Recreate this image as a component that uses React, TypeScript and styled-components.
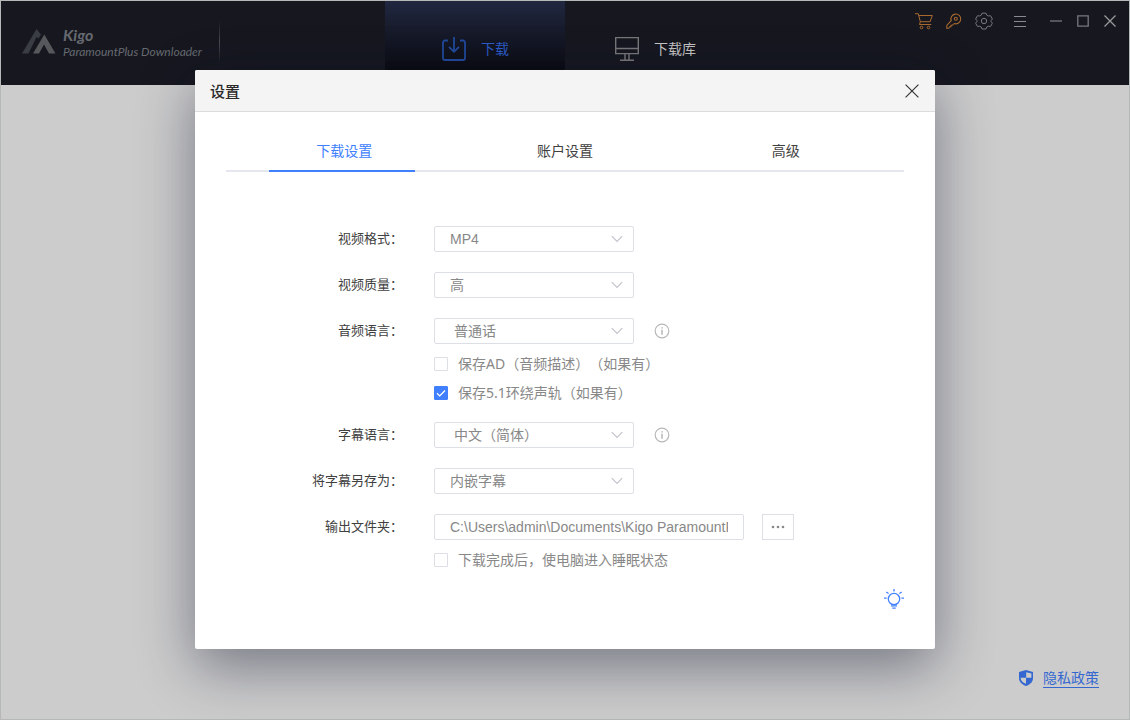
import React, { useState } from 'react';
import styled, { createGlobalStyle, css } from 'styled-components';

const uiFont = `"Noto Sans", "Noto Sans CJK SC", sans-serif`;
const cjkFont = `"Noto Sans CJK SC", sans-serif`;
const fieldFont = `"Liberation Sans", "Noto Sans CJK SC", sans-serif`;
const blue = '#4080ff';

const GlobalStyle = createGlobalStyle`
  *, *::before, *::after { box-sizing: border-box; }
  body {
    margin: 0;
    background: #cccccc;
    font-family: ${uiFont};
    text-spacing-trim: space-all;
  }
  button { margin: 0; padding: 0; border: 0; background: none; font: inherit; cursor: pointer; }
  svg { display: block; }
`;

const Window = styled.div`
  display: flex;
  flex-direction: column;
  min-height: 100vh;
  border: 1px solid #b4b8b6;
  background: #cccccc;
`;

const TitleBar = styled.header`
  display: grid;
  grid-template-columns: 1fr auto 1fr;
  height: 84px;
  background: #16171f;
`;

const Brand = styled.div`
  display: flex;
  align-items: center;
  align-self: start;
  height: 42px;
  margin-top: 20px;
  padding-left: 21px;
  gap: 7px;
  color: #666a70;
  font-family: Lato, sans-serif;
  font-style: italic;
`;

const BrandText = styled.div`
  white-space: nowrap;
`;

const BrandName = styled.div`
  font-size: 16px;
  line-height: 18px;
  font-weight: 700;
`;

const BrandProduct = styled.div`
  font-size: 12px;
  line-height: 15px;
`;

const BrandDivider = styled.div`
  width: 1px;
  height: 42px;
  margin-left: 10px;
  background: linear-gradient(#16171f, #4a4c54 50%, #16171f);
`;

const MainNav = styled.nav`
  display: flex;
`;

const NavButton = styled.button<{ $active?: boolean }>`
  display: flex;
  align-items: center;
  justify-content: center;
  gap: 14px;
  width: 180px;
  padding-top: 12px;
  font-family: ${cjkFont};
  font-size: 14px;
  color: #c4c4c4;

  span { padding-bottom: 2px; }

  ${(p) =>
    p.$active &&
    css`
      color: #2c5cc8;
      background: linear-gradient(#20273f, #0a0a10 84%);
    `}
`;

const WindowTools = styled.div`
  display: flex;
  justify-content: flex-end;
  align-items: center;
  align-self: start;
  height: 40px;
  padding-right: 4px;
`;

const ToolButton = styled.button<{ $width: number; $color: string }>`
  display: flex;
  align-items: center;
  justify-content: center;
  width: ${(p) => p.$width}px;
  height: 24px;
  color: ${(p) => p.$color};
`;

const Body = styled.main`
  display: flex;
  flex: 1;
  align-items: flex-end;
  justify-content: flex-end;
  padding: 0 30px 31px;
`;

const PrivacyLink = styled.a`
  display: flex;
  align-items: center;
  gap: 10px;
  color: #3468d0;
  font-family: ${cjkFont};
  font-size: 14px;
  line-height: 19px;
  text-decoration: none;

  span { border-bottom: 1px solid #3468d0; }
`;

const Overlay = styled.div`
  position: absolute;
  inset: 0;
  display: flex;
  align-items: flex-start;
  justify-content: center;
  padding: 70px 20px;
`;

const Dialog = styled.section`
  width: 100%;
  max-width: 740px;
  border-radius: 2px;
  background: #ffffff;
  box-shadow: 0 18px 56px rgba(15, 20, 45, 0.45);
`;

const DialogHeader = styled.header`
  display: flex;
  align-items: center;
  justify-content: space-between;
  height: 42px;
  padding: 0 16px 0 15px;
  border-bottom: 1px solid #dddddd;
  border-radius: 2px 2px 0 0;
  background: #f4f4f4;
`;

const DialogTitle = styled.h1`
  margin: 0;
  font-family: ${cjkFont};
  font-size: 15px;
  font-weight: 500;
  color: #2a2a2a;
`;

const CloseButton = styled.button`
  color: #333333;
`;

const TabList = styled.div`
  display: grid;
  grid-template-columns: repeat(3, 1fr);
  margin: 20px 31px 0;
  padding: 0 8px;
  border-bottom: 2px solid #e4e7ed;
`;

const TabButton = styled.button<{ $active: boolean }>`
  position: relative;
  height: 38px;
  padding-bottom: 2px;
  font-family: ${cjkFont};
  font-size: 14px;
  line-height: 36px;
  color: ${(p) => (p.$active ? blue : '#404040')};

  &::after {
    content: '';
    position: absolute;
    left: 16%;
    right: 18%;
    bottom: -2px;
    height: 2px;
    background: ${(p) => (p.$active ? blue : 'transparent')};
  }
`;

const Form = styled.form`
  display: flex;
  flex-direction: column;
  padding: 54px 31px 0 31px;
`;

const Row = styled.div`
  display: grid;
  grid-template-columns: 177px 1fr;
  column-gap: 31px;
  margin-bottom: 20px;
`;

const RowLabel = styled.label`
  font-family: ${cjkFont};
  font-size: 13px;
  line-height: 24px;
  text-align: right;
  color: #404040;
`;

const Controls = styled.div`
  display: flex;
  align-items: center;
`;

const SelectBox = styled.div`
  position: relative;
  width: 200px;
  color: #c0c4cc;

  svg {
    position: absolute;
    top: 9px;
    right: 11px;
    pointer-events: none;
  }
`;

const fieldStyle = css`
  display: block;
  width: 100%;
  height: 26px;
  border: 1px solid #dcdfe6;
  border-radius: 2px;
  background: #ffffff;
  font-family: ${fieldFont};
  font-size: 14px;
  color: #888888;
  outline: none;
`;

const Select = styled.select<{ $indent?: boolean }>`
  ${fieldStyle}
  appearance: none;
  padding: 0 30px 0 ${(p) => (p.$indent ? 19 : 15)}px;
`;

const PathInput = styled.input`
  ${fieldStyle}
  max-width: 310px;
  padding: 0 15px 0 15px;
`;

const InfoButton = styled.button`
  margin-left: 20px;
  color: #b8b8b8;
`;

const BrowseButton = styled.button`
  display: flex;
  align-items: center;
  justify-content: center;
  width: 32px;
  height: 26px;
  margin-left: 18px;
  border: 1px solid #dcdfe6;
  color: #888888;
`;

const CheckGroup = styled.div`
  grid-column: 2;
  padding-top: 5px;
  margin-bottom: -5px;
`;

const CheckLabel = styled.label`
  display: flex;
  align-items: center;
  gap: 10px;
  height: 29px;
  font-size: 14px;
  line-height: 20px;
  color: #888888;
`;

const CheckBox = styled.span`
  position: relative;
  width: 14px;
  height: 14px;

  svg {
    position: absolute;
    inset: 0;
    pointer-events: none;
  }
`;

const CheckInput = styled.input`
  appearance: none;
  display: block;
  width: 14px;
  height: 14px;
  margin: 0;
  border: 1px solid #dcdfe6;
  border-radius: 1px;
  background: #ffffff;

  &:checked {
    border-color: ${blue};
    background: ${blue};
  }
`;

const DialogFooter = styled.footer`
  display: flex;
  justify-content: flex-end;
  padding: 0 31px 40px;
`;

const TipButton = styled.button`
  color: ${blue};
`;

const Logo = () => (
  <svg width="34" height="26" viewBox="0 0 34 26" aria-hidden="true">
    <path d="M0 24.500 14.500 0l4.500 5.500-2.500 4-2-1.500L6.500 24.500z" fill="#3a3d44" />
    <path d="M11 24.500 22.300 5.500 33.500 24.500H27l-5-9-5 9z" fill="#56585c" />
  </svg>
);

const DownloadIcon = () => (
  <svg width="26" height="26" viewBox="0 0 26 26" fill="none" stroke="#214a9c" strokeWidth="1.800" aria-hidden="true">
    <path d="M7 4.500H4a2 2 0 0 0-2 2V22a2 2 0 0 0 2 2h18a2 2 0 0 0 2-2V6.500a2 2 0 0 0-2-2h-3M13 1v15M8 10.800l5 5 5-5" />
  </svg>
);

const MonitorIcon = () => (
  <svg width="26" height="26" viewBox="0 0 26 26" fill="none" stroke="#77777a" strokeWidth="1.400" aria-hidden="true">
    <path d="M1.700 1.600h22.600v16H1.700zM1.700 12.500h22.600M11 18v6M15 18v6M6 24.250h14" />
  </svg>
);

const CartIcon = () => (
  <svg width="18" height="17" viewBox="0 0 18 17" fill="none" stroke="currentColor" aria-hidden="true">
    <path d="M0 .7h3.300l2 8h9.800l2.200-6.200H3.800M5.300 8.700l-.8 2.800h11.800" />
    <circle cx="6.500" cy="14.500" r="1.300" />
    <circle cx="13.500" cy="14.500" r="1.300" />
  </svg>
);

const KeyIcon = () => (
  <svg width="16" height="16" viewBox="0 0 16 16" fill="none" stroke="currentColor" strokeWidth="1.100" aria-hidden="true">
    <path d="M5.200 7.700A4.900 4.900 0 1 1 8.200 10.600L6.300 12.300H5v1.400H3.700L2.700 15.200H.8v-2.700z" />
    <circle cx="9.800" cy="5.800" r="1.500" />
  </svg>
);

const GearIcon = () => (
  <svg width="18" height="18" viewBox="0 0 18 18" fill="none" stroke="currentColor" aria-hidden="true">
    <path d="M7 1.200h4l.8 2 1.500.8 2.200-.3 1.900 3.300L16 8.700v.8l1.400 1.700-1.900 3.300-2.200-.3-1.500.8-.8 2H7l-.8-2-1.500-.8-2.200.3-1.900-3.300L2 9.500v-.8L.6 7l1.900-3.300 2.200.3 1.500-.8z" />
    <circle cx="9" cy="9" r="2.700" />
  </svg>
);

const MenuIcon = () => (
  <svg width="12" height="11" viewBox="0 0 12 11" stroke="currentColor" aria-hidden="true">
    <path d="M0 .5h12M0 5.500h12M0 10.500h12" />
  </svg>
);

const MinimizeIcon = () => (
  <svg width="12" height="12" viewBox="0 0 12 12" stroke="currentColor" aria-hidden="true">
    <path d="M0 6h12" strokeWidth="1.300" />
  </svg>
);

const MaximizeIcon = () => (
  <svg width="12" height="12" viewBox="0 0 12 12" fill="none" stroke="currentColor" aria-hidden="true">
    <path d="M.8.8h10.400v10.400H.8z" strokeWidth="1.300" />
  </svg>
);

const CrossIcon = ({ size = 12, stroke = 1 }: { size?: number; stroke?: number }) => (
  <svg width={size} height={size} viewBox="0 0 12 12" stroke="currentColor" strokeWidth={stroke} aria-hidden="true">
    <path d="M.5.5l11 11M11.500.5l-11 11" />
  </svg>
);

const ChevronIcon = () => (
  <svg width="12" height="8" viewBox="0 0 12 8" fill="none" stroke="currentColor" strokeWidth="1.200" aria-hidden="true">
    <path d="M.8 1.200 6 6.400l5.200-5.200" />
  </svg>
);

const InfoIcon = () => (
  <svg width="16" height="16" viewBox="0 0 16 16" fill="none" stroke="currentColor" strokeWidth="1.200" aria-hidden="true">
    <circle cx="8" cy="8" r="6.800" />
    <path d="M8 6.800v5M8 4.200v1.400" strokeWidth="1.500" />
  </svg>
);

const CheckIcon = () => (
  <svg width="14" height="14" viewBox="0 0 14 14" fill="none" stroke="#ffffff" strokeWidth="1.300" aria-hidden="true">
    <path d="M3 7.200l2.700 2.700L11 4.500" />
  </svg>
);

const DotsIcon = () => (
  <svg width="14" height="4" viewBox="0 0 14 4" fill="currentColor" aria-hidden="true">
    <circle cx="2" cy="2" r="1.300" />
    <circle cx="7" cy="2" r="1.300" />
    <circle cx="12" cy="2" r="1.300" />
  </svg>
);

const BulbIcon = () => (
  <svg width="20" height="20" viewBox="0 0 20 20" fill="none" stroke="currentColor" strokeWidth="1.300" aria-hidden="true">
    <circle cx="10" cy="10" r="5.700" />
    <path d="M7 16.900h6M8.300 19.200h3.400M10 0v2.500M0 9.200h2.600M17.400 9.200H20M2.300 3l2.300 1.500M17.700 3l-2.300 1.500" />
  </svg>
);

const ShieldIcon = () => (
  <svg width="14" height="16" viewBox="0 0 14 16" aria-hidden="true">
    <path d="M7 0l7 2v6c0 4-3 6.500-7 8-4-1.500-7-4-7-8V2z" fill="#3468d0" />
    <path d="M7.200 2.200 12.400 3.400V7.800H7.200zM1.600 7.800H7v6C3.800 12.500 1.700 10.800 1.600 7.800z" fill="#cccccc" />
  </svg>
);

type SelectFieldProps = {
  id: string;
  label: string;
  options: string[];
  indent?: boolean;
  info?: string;
  children?: React.ReactNode;
};

const SelectField = ({ id, label, options, indent, info, children }: SelectFieldProps) => (
  <Row>
    <RowLabel htmlFor={id}>{label}</RowLabel>
    <Controls>
      <SelectBox>
        <Select id={id} $indent={indent}>
          {options.map((o) => (
            <option key={o}>{o}</option>
          ))}
        </Select>
        <ChevronIcon />
      </SelectBox>
      {info && (
        <InfoButton type="button" aria-label={info}>
          <InfoIcon />
        </InfoButton>
      )}
    </Controls>
    {children}
  </Row>
);

const CheckField = ({ text, initial = false }: { text: string; initial?: boolean }) => {
  const [checked, setChecked] = useState(initial);
  return (
    <CheckLabel>
      <CheckBox>
        <CheckInput type="checkbox" checked={checked} onChange={(e) => setChecked(e.target.checked)} />
        {checked && <CheckIcon />}
      </CheckBox>
      {text}
    </CheckLabel>
  );
};

const tabs = ['下载设置', '账户设置', '高级'];

export default function App() {
  const [tab, setTab] = useState(0);
  return (
    <>
      <GlobalStyle />
      <Window>
        <TitleBar>
          <Brand>
            <Logo />
            <BrandText>
              <BrandName>Kigo</BrandName>
              <BrandProduct>ParamountPlus Downloader</BrandProduct>
            </BrandText>
            <BrandDivider />
          </Brand>
          <MainNav>
            <NavButton type="button" $active>
              <DownloadIcon />
              <span>下载</span>
            </NavButton>
            <NavButton type="button">
              <MonitorIcon />
              <span>下载库</span>
            </NavButton>
          </MainNav>
          <WindowTools>
            <ToolButton type="button" aria-label="购物车" $width={30} $color="#a8692f"><CartIcon /></ToolButton>
            <ToolButton type="button" aria-label="注册" $width={30} $color="#a8692f"><KeyIcon /></ToolButton>
            <ToolButton type="button" aria-label="设置" $width={30} $color="#77797e"><GearIcon /></ToolButton>
            <ToolButton type="button" aria-label="菜单" $width={42} $color="#8a8b8f"><MenuIcon /></ToolButton>
            <ToolButton type="button" aria-label="最小化" $width={30} $color="#77797e"><MinimizeIcon /></ToolButton>
            <ToolButton type="button" aria-label="最大化" $width={24} $color="#77797e"><MaximizeIcon /></ToolButton>
            <ToolButton type="button" aria-label="关闭" $width={30} $color="#9a9a9c"><CrossIcon stroke={1.3} /></ToolButton>
          </WindowTools>
        </TitleBar>
        <Body>
          <PrivacyLink href="#privacy">
            <ShieldIcon />
            <span>隐私政策</span>
          </PrivacyLink>
        </Body>
      </Window>
      <Overlay>
        <Dialog role="dialog" aria-labelledby="dialog-title">
          <DialogHeader>
            <DialogTitle id="dialog-title">设置</DialogTitle>
            <CloseButton type="button" aria-label="关闭">
              <CrossIcon size={14} />
            </CloseButton>
          </DialogHeader>
          <TabList role="tablist">
            {tabs.map((name, i) => (
              <TabButton
                key={name}
                type="button"
                role="tab"
                aria-selected={i === tab}
                $active={i === tab}
                onClick={() => setTab(i)}
              >
                {name}
              </TabButton>
            ))}
          </TabList>
          <Form>
            <SelectField id="format" label="视频格式：" options={['MP4']} />
            <SelectField id="quality" label="视频质量：" options={['高']} />
            <SelectField id="audio" label="音频语言：" options={['普通话']} indent info="音频语言说明">
              <CheckGroup>
                <CheckField text="保存AD（音频描述）（如果有）" />
                <CheckField text="保存5.1环绕声轨（如果有）" initial />
              </CheckGroup>
            </SelectField>
            <SelectField id="subtitle" label="字幕语言：" options={['中文（简体）']} indent info="字幕语言说明" />
            <SelectField id="save-as" label="将字幕另存为：" options={['内嵌字幕']} />
            <Row>
              <RowLabel htmlFor="folder">输出文件夹：</RowLabel>
              <Controls>
                <PathInput
                  id="folder"
                  type="text"
                  defaultValue="C:\Users\admin\Documents\Kigo ParamountPlus Downloader"
                />
                <BrowseButton type="button" aria-label="浏览">
                  <DotsIcon />
                </BrowseButton>
              </Controls>
              <CheckGroup>
                <CheckField text="下载完成后，使电脑进入睡眠状态" />
              </CheckGroup>
            </Row>
          </Form>
          <DialogFooter>
            <TipButton type="button" aria-label="提示">
              <BulbIcon />
            </TipButton>
          </DialogFooter>
        </Dialog>
      </Overlay>
    </>
  );
}
